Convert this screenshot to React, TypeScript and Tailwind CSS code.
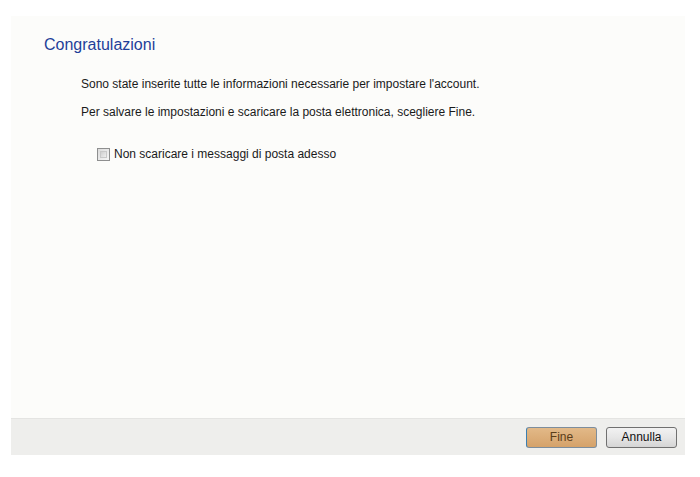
import React from "react";

export default function App() {
  return (
    <div className="w-[700px] h-[477px] bg-white pt-[16px] pl-[11px]" style={{ fontFamily: '"Liberation Sans", Arial, sans-serif' }}>
      <div className="w-[674px] h-[439px] flex flex-col bg-[#fcfcfa]">
        <div className="flex-1 flex flex-col">
          <div className="pl-[33px] pt-[19px] text-[16px] leading-[20px] text-[#1f3f99]">Congratulazioni</div>
          <div className="pl-[70px] pt-[22px] text-[12px] leading-[15px] text-[#1a1a1a]">
            Sono state inserite tutte le informazioni necessarie per impostare l'account.
          </div>
          <div className="pl-[70px] pt-[13px] text-[12px] leading-[15px] text-[#1a1a1a]">
            Per salvare le impostazioni e scaricare la posta elettronica, scegliere Fine.
          </div>
          <div className="pl-[86px] pt-[27px] flex items-center gap-[4px] text-[12px] leading-[15px] text-[#1a1a1a]">
            <span className="w-[13px] h-[13px] border border-[#8e8f8f] bg-gradient-to-br from-[#dcdcdc] to-[#f5f5f5] p-[2px] flex">
              <span className="flex-1 bg-gradient-to-br from-[#cfcfcf] to-[#eeeeee] border border-[#c8c8c8]" />
            </span>
            <span>Non scaricare i messaggi di posta adesso</span>
          </div>
        </div>
        <div className="h-[37px] bg-[#eeeeec] border-t border-[#e4e4e2] flex items-center justify-end gap-[9px] pr-[8px]">
          <button className="w-[71px] h-[21px] rounded-[3px] border border-[#7d8d9c] border-l-[#3c7fb1] bg-gradient-to-b from-[#e2b988] to-[#d5a26a] text-[12px] text-[#5a3d1a] flex items-center justify-center">
            Fine
          </button>
          <button className="w-[71px] h-[21px] rounded-[3px] border border-[#707070] bg-gradient-to-b from-[#f2f2f2] via-[#e6e6e6] to-[#d5d5d5] text-[12px] text-[#111] flex items-center justify-center">
            Annulla
          </button>
        </div>
      </div>
    </div>
  );
}
